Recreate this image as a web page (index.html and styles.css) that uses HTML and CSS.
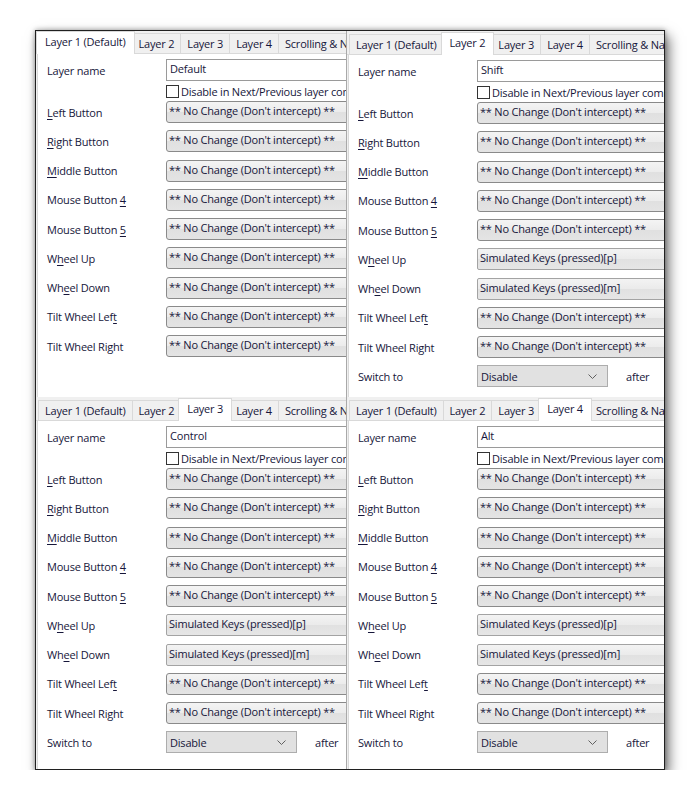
FILE: index.html
```html
<!DOCTYPE html>
<html>
<head>
<meta charset="utf-8">
<link rel="stylesheet" href="styles.css">
</head>
<body>
<div class="frame">
  <section class="panel">
    <div class="tabs">
      <div class="tab sel">Layer 1 (Default)</div>
      <div class="tab">Layer 2</div>
      <div class="tab">Layer 3</div>
      <div class="tab">Layer 4</div>
      <div class="tab">Scrolling &amp; Navigation</div>
    </div>
    <div class="body">
      <div class="row"><span class="lbl">Layer name</span><div class="textbox">Default</div></div>
      <div class="check"><span class="cb"></span><span>Disable in Next/Previous layer commands</span></div>
      <div class="row"><span class="lbl"><u>L</u>eft Button</span><div class="combo">** No Change (Don't intercept) **</div></div>
      <div class="row"><span class="lbl"><u>R</u>ight Button</span><div class="combo">** No Change (Don't intercept) **</div></div>
      <div class="row"><span class="lbl"><u>M</u>iddle Button</span><div class="combo">** No Change (Don't intercept) **</div></div>
      <div class="row"><span class="lbl">Mouse Button <u>4</u></span><div class="combo">** No Change (Don't intercept) **</div></div>
      <div class="row"><span class="lbl">Mouse Button <u>5</u></span><div class="combo">** No Change (Don't intercept) **</div></div>
      <div class="row"><span class="lbl">W<u>h</u>eel Up</span><div class="combo">** No Change (Don't intercept) **</div></div>
      <div class="row"><span class="lbl">Wh<u>e</u>el Down</span><div class="combo">** No Change (Don't intercept) **</div></div>
      <div class="row"><span class="lbl">Tilt Wheel Lef<u>t</u></span><div class="combo">** No Change (Don't intercept) **</div></div>
      <div class="row"><span class="lbl">Tilt Wheel Ri<u>g</u>ht</span><div class="combo">** No Change (Don't intercept) **</div></div>
    </div>
  </section>

  <section class="panel right shift">
    <div class="tabs">
      <div class="tab">Layer 1 (Default)</div>
      <div class="tab sel">Layer 2</div>
      <div class="tab">Layer 3</div>
      <div class="tab">Layer 4</div>
      <div class="tab">Scrolling &amp; Navigation</div>
    </div>
    <div class="body">
      <div class="row"><span class="lbl">Layer name</span><div class="textbox">Shift</div></div>
      <div class="check"><span class="cb"></span><span>Disable in Next/Previous layer commands</span></div>
      <div class="row"><span class="lbl"><u>L</u>eft Button</span><div class="combo">** No Change (Don't intercept) **</div></div>
      <div class="row"><span class="lbl"><u>R</u>ight Button</span><div class="combo">** No Change (Don't intercept) **</div></div>
      <div class="row"><span class="lbl"><u>M</u>iddle Button</span><div class="combo">** No Change (Don't intercept) **</div></div>
      <div class="row"><span class="lbl">Mouse Button <u>4</u></span><div class="combo">** No Change (Don't intercept) **</div></div>
      <div class="row"><span class="lbl">Mouse Button <u>5</u></span><div class="combo">** No Change (Don't intercept) **</div></div>
      <div class="row"><span class="lbl">W<u>h</u>eel Up</span><div class="combo keys">Simulated Keys (pressed)[p]</div></div>
      <div class="row"><span class="lbl">Wh<u>e</u>el Down</span><div class="combo keys">Simulated Keys (pressed)[m]</div></div>
      <div class="row"><span class="lbl">Tilt Wheel Lef<u>t</u></span><div class="combo">** No Change (Don't intercept) **</div></div>
      <div class="row"><span class="lbl">Tilt Wheel Ri<u>g</u>ht</span><div class="combo">** No Change (Don't intercept) **</div></div>
      <div class="row"><span class="lbl">Switch to</span><div class="select">Disable<svg class="chev" width="9" height="5" viewBox="0 0 9 5"><path d="M0.5 0.5 L4.5 4.5 L8.5 0.5" fill="none" stroke="#606060" stroke-width="1"/></svg></div><span class="after">after</span></div>
    </div>
  </section>

  <section class="panel shift">
    <div class="tabs">
      <div class="tab">Layer 1 (Default)</div>
      <div class="tab">Layer 2</div>
      <div class="tab sel">Layer 3</div>
      <div class="tab">Layer 4</div>
      <div class="tab">Scrolling &amp; Navigation</div>
    </div>
    <div class="body">
      <div class="row"><span class="lbl">Layer name</span><div class="textbox">Control</div></div>
      <div class="check"><span class="cb"></span><span>Disable in Next/Previous layer commands</span></div>
      <div class="row"><span class="lbl"><u>L</u>eft Button</span><div class="combo">** No Change (Don't intercept) **</div></div>
      <div class="row"><span class="lbl"><u>R</u>ight Button</span><div class="combo">** No Change (Don't intercept) **</div></div>
      <div class="row"><span class="lbl"><u>M</u>iddle Button</span><div class="combo">** No Change (Don't intercept) **</div></div>
      <div class="row"><span class="lbl">Mouse Button <u>4</u></span><div class="combo">** No Change (Don't intercept) **</div></div>
      <div class="row"><span class="lbl">Mouse Button <u>5</u></span><div class="combo">** No Change (Don't intercept) **</div></div>
      <div class="row"><span class="lbl">W<u>h</u>eel Up</span><div class="combo keys">Simulated Keys (pressed)[p]</div></div>
      <div class="row"><span class="lbl">Wh<u>e</u>el Down</span><div class="combo keys">Simulated Keys (pressed)[m]</div></div>
      <div class="row"><span class="lbl">Tilt Wheel Lef<u>t</u></span><div class="combo">** No Change (Don't intercept) **</div></div>
      <div class="row"><span class="lbl">Tilt Wheel Ri<u>g</u>ht</span><div class="combo">** No Change (Don't intercept) **</div></div>
      <div class="row"><span class="lbl">Switch to</span><div class="select">Disable<svg class="chev" width="9" height="5" viewBox="0 0 9 5"><path d="M0.5 0.5 L4.5 4.5 L8.5 0.5" fill="none" stroke="#606060" stroke-width="1"/></svg></div><span class="after">after</span></div>
    </div>
  </section>

  <section class="panel right shift">
    <div class="tabs">
      <div class="tab">Layer 1 (Default)</div>
      <div class="tab">Layer 2</div>
      <div class="tab">Layer 3</div>
      <div class="tab sel">Layer 4</div>
      <div class="tab">Scrolling &amp; Navigation</div>
    </div>
    <div class="body">
      <div class="row"><span class="lbl">Layer name</span><div class="textbox">Alt</div></div>
      <div class="check"><span class="cb"></span><span>Disable in Next/Previous layer commands</span></div>
      <div class="row"><span class="lbl"><u>L</u>eft Button</span><div class="combo">** No Change (Don't intercept) **</div></div>
      <div class="row"><span class="lbl"><u>R</u>ight Button</span><div class="combo">** No Change (Don't intercept) **</div></div>
      <div class="row"><span class="lbl"><u>M</u>iddle Button</span><div class="combo">** No Change (Don't intercept) **</div></div>
      <div class="row"><span class="lbl">Mouse Button <u>4</u></span><div class="combo">** No Change (Don't intercept) **</div></div>
      <div class="row"><span class="lbl">Mouse Button <u>5</u></span><div class="combo">** No Change (Don't intercept) **</div></div>
      <div class="row"><span class="lbl">W<u>h</u>eel Up</span><div class="combo keys">Simulated Keys (pressed)[p]</div></div>
      <div class="row"><span class="lbl">Wh<u>e</u>el Down</span><div class="combo keys">Simulated Keys (pressed)[m]</div></div>
      <div class="row"><span class="lbl">Tilt Wheel Lef<u>t</u></span><div class="combo">** No Change (Don't intercept) **</div></div>
      <div class="row"><span class="lbl">Tilt Wheel Ri<u>g</u>ht</span><div class="combo">** No Change (Don't intercept) **</div></div>
      <div class="row"><span class="lbl">Switch to</span><div class="select">Disable<svg class="chev" width="9" height="5" viewBox="0 0 9 5"><path d="M0.5 0.5 L4.5 4.5 L8.5 0.5" fill="none" stroke="#606060" stroke-width="1"/></svg></div><span class="after">after</span></div>
    </div>
  </section>
</div>
</body>
</html>
```

FILE: styles.css
```css
* { box-sizing: border-box; }
html, body { margin: 0; padding: 0; background: #ffffff; }
body {
  font-family: "Open Sans", "Liberation Sans", sans-serif;
  font-size: 11px;
  letter-spacing: -0.2px;
  color: #16163a;
}
.frame {
  margin: 30px 0 0 35px;
  width: 630px;
  height: 740px;
  border: 1px solid #202020;
  display: grid;
  grid-template-columns: 310px 318px;
  grid-template-rows: 366px 372px;
  box-shadow: 4px 6px 12px rgba(0,0,0,0.55), 0 0 5px rgba(0,0,0,0.35);
  background: #ffffff;
}
.panel {
  overflow: hidden;
  background: #f0f0f0;
  display: flex;
  flex-direction: column;
  min-width: 0;
}
.panel.right { border-left: 1px solid #a9a9a9; }
.panel.shift { padding-top: 1px; }
.tabs {
  display: flex;
  align-items: flex-end;
  height: 23px;
  padding-left: 3px;
  border-bottom: 1px solid #d9d9d9;
  flex: none;
  white-space: nowrap;
}
.tab {
  height: 20px;
  line-height: 19px;
  padding: 0 6px;
  border: 1px solid #d9d9d9;
  border-bottom: none;
  margin-left: -1px;
  background: #f0f0f0;
  flex: none;
}
.tab.sel {
  height: 23px;
  line-height: 19px;
  margin: 0 -2px -1px -3px;
  padding: 0 8px;
  background: #ffffff;
  position: relative;
  z-index: 1;
}
.body {
  flex: 1;
  margin-left: 1px;
  border-left: 1px solid #d9d9d9;
  background: #ffffff;
  padding: 5px 0 0 9px;
  white-space: nowrap;
}
.row {
  display: flex;
  align-items: center;
  height: 22px;
  margin-bottom: 7.25px;
}
.row:first-child { margin-bottom: 4px; }
.lbl {
  width: 119px;
  flex: none;
}
u { text-decoration-thickness: 1px; text-underline-offset: 2px; }
.textbox {
  width: 260px;
  height: 22px;
  flex: none;
  border: 1px solid #9a9a9a;
  background: #ffffff;
  padding: 0 0 0 3px;
  line-height: 18px;
}
.check {
  display: flex;
  align-items: center;
  height: 13px;
  margin: 0 0 3px 119px;
  gap: 2px;
}
.cb {
  width: 13px;
  height: 13px;
  flex: none;
  border: 1px solid #333333;
  background: #ffffff;
}
.combo {
  width: 260px;
  height: 22px;
  flex: none;
  border: 1px solid #8a8a8a;
  border-radius: 3px;
  background: linear-gradient(#f4f4f4 0%, #ececec 48%, #e0e0e0 52%, #e4e4e4 100%);
  padding: 0 0 0 2px;
  line-height: 18px;
}
.combo.keys {
  border-color: #a3a3a3;
  border-radius: 2px;
  background: linear-gradient(#f3f3f3 0%, #ebebeb 48%, #e1e1e1 52%, #e6e6e6 100%);
}
.select {
  width: 131px;
  height: 22px;
  flex: none;
  display: flex;
  align-items: center;
  justify-content: space-between;
  border: 1px solid #adadad;
  background: #e1e1e1;
  padding: 1px 10px 0 3px;
}
.chev { flex: none; }
.after { margin-left: 18px; }
```
